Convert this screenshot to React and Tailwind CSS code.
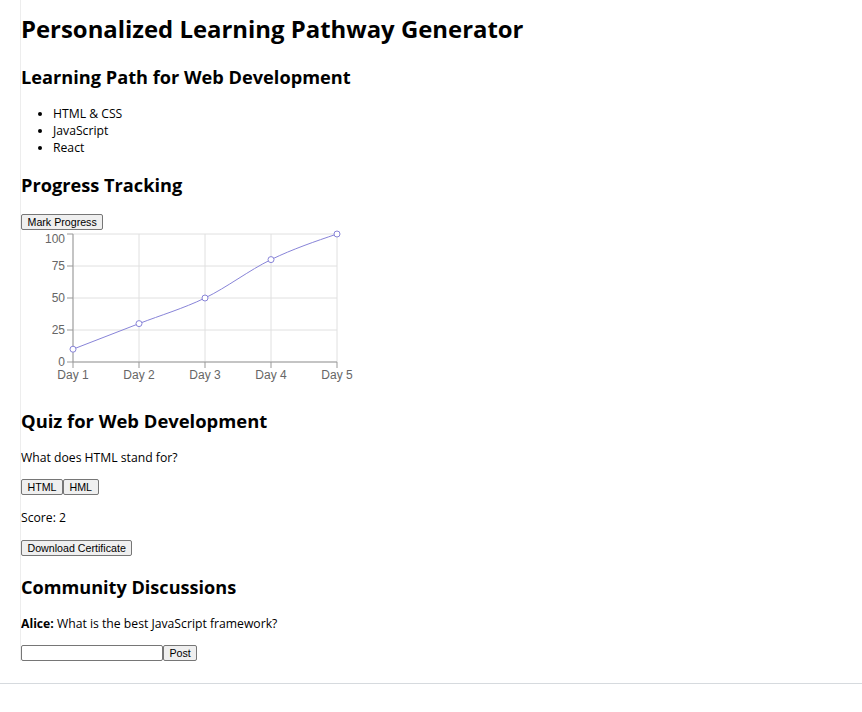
import { useState } from "react";

const progressData = [
  { day: "Day 1", value: 10 },
  { day: "Day 2", value: 30 },
  { day: "Day 3", value: 50 },
  { day: "Day 4", value: 80 },
  { day: "Day 5", value: 100 },
];

// chart geometry (svg coords)
const X0 = 52;
const STEP_X = 66;
const Y0 = 132;
const SCALE_Y = 1.28;

const pts = progressData.map((d, i) => [X0 + i * STEP_X, Y0 - d.value * SCALE_Y]);

// same curve as d3 curveMonotoneX
function monotonePath(p) {
  const n = p.length;
  const sign = (v) => (v < 0 ? -1 : 1);
  const t = new Array(n).fill(0);
  for (let i = 1; i < n - 1; i++) {
    const h0 = p[i][0] - p[i - 1][0];
    const h1 = p[i + 1][0] - p[i][0];
    const s0 = (p[i][1] - p[i - 1][1]) / h0;
    const s1 = (p[i + 1][1] - p[i][1]) / h1;
    const q = (s0 * h1 + s1 * h0) / (h0 + h1);
    t[i] = (sign(s0) + sign(s1)) * Math.min(Math.abs(s0), Math.abs(s1), 0.5 * Math.abs(q)) || 0;
  }
  const h = (a, b) => p[b][0] - p[a][0];
  t[0] = (3 * (p[1][1] - p[0][1]) / h(0, 1) - t[1]) / 2;
  t[n - 1] = (3 * (p[n - 1][1] - p[n - 2][1]) / h(n - 2, n - 1) - t[n - 2]) / 2;
  let d = `M${p[0][0]},${p[0][1]}`;
  for (let i = 0; i < n - 1; i++) {
    const dx = (p[i + 1][0] - p[i][0]) / 3;
    d += `C${p[i][0] + dx},${p[i][1] + dx * t[i]},${p[i + 1][0] - dx},${p[i + 1][1] - dx * t[i + 1]},${p[i + 1][0]},${p[i + 1][1]}`;
  }
  return d;
}

function ProgressChart() {
  const yTicks = [0, 25, 50, 75, 100];
  return (
    <svg
      width="340"
      height="155"
      className="block overflow-visible"
      style={{ fontFamily: '"Liberation Sans", Arial, sans-serif' }}
    >
      {/* grid */}
      {yTicks.map((v) => (
        <line key={"h" + v} x1={X0} x2={X0 + 4 * STEP_X} y1={Y0 - v * SCALE_Y} y2={Y0 - v * SCALE_Y} stroke="#e0e0e0" />
      ))}
      {progressData.map((d, i) => (
        <line key={"v" + i} x1={X0 + i * STEP_X} x2={X0 + i * STEP_X} y1={Y0 - 100 * SCALE_Y} y2={Y0} stroke="#e0e0e0" />
      ))}
      {/* axes */}
      <line x1={X0} x2={X0} y1={Y0 - 100 * SCALE_Y} y2={Y0} stroke="#999" />
      <line x1={X0} x2={X0 + 4 * STEP_X} y1={Y0} y2={Y0} stroke="#999" />
      {yTicks.map((v) => (
        <g key={"yt" + v}>
          <line x1={X0 - 6} x2={X0} y1={Y0 - v * SCALE_Y} y2={Y0 - v * SCALE_Y} stroke="#999" />
          <text
            x={X0 - 8}
            y={Y0 - v * SCALE_Y + (v === 100 ? 4.5 : 0)}
            dy="0.355em"
            textAnchor="end"
            fontSize="12"
            fill="#666"
          >
            {v}
          </text>
        </g>
      ))}
      {progressData.map((d, i) => (
        <g key={"xt" + i}>
          <line x1={X0 + i * STEP_X} x2={X0 + i * STEP_X} y1={Y0} y2={Y0 + 6} stroke="#999" />
          <text x={X0 + i * STEP_X} y={Y0 + 8} dy="0.71em" textAnchor="middle" fontSize="12" fill="#666">
            {d.day}
          </text>
        </g>
      ))}
      <path d={monotonePath(pts)} fill="none" stroke="#8884d8" strokeWidth="1" />
      {pts.map(([x, y], i) => (
        <circle key={i} cx={x} cy={y} r="3" fill="#fff" stroke="#8884d8" />
      ))}
    </svg>
  );
}

const btn =
  "border border-[#767676] bg-[#efefef] rounded-[2px] px-[5.5px] py-[1px] text-[10.67px] leading-[12px] text-black font-['Liberation_Sans',Arial,sans-serif]";

export default function App() {
  const [comment, setComment] = useState("");
  return (
    <div className="border-b border-[#d6dade] pb-[22px] bg-white text-black text-[12.2px] leading-[17px] font-['Open_Sans',sans-serif]">
      <div className="ml-[20px] border-l border-[#ededed] overflow-hidden">
        <h1 className="mt-[12px] text-[23.9px] leading-[34px] font-bold">Personalized Learning Pathway Generator</h1>

        <h2 className="mt-[18px] text-[18.2px] leading-[26px] font-bold">Learning Path for Web Development</h2>
        <ul className="mt-[15px] pl-[32px] list-disc">
          <li>HTML &amp; CSS</li>
          <li>JavaScript</li>
          <li>React</li>
        </ul>

        <h2 className="mt-[16px] text-[18.2px] leading-[26px] font-bold">Progress Tracking</h2>
        <button className={"mt-[16px] block " + btn}>Mark Progress</button>
        <ProgressChart />

        <h2 className="mt-[23px] text-[18.4px] leading-[26px] font-bold">Quiz for Web Development</h2>
        <p className="mt-[15px]">What does HTML stand for?</p>
        <div className="mt-[13px] flex">
          <button className={btn}>HTML</button>
          <button className={btn}>HML</button>
        </div>
        <p className="mt-[14px]">Score: 2</p>
        <button className={"mt-[14px] block " + btn}>Download Certificate</button>

        <h2 className="mt-[18px] text-[18.1px] leading-[26px] font-bold">Community Discussions</h2>
        <p className="mt-[15px]">
          <strong className="font-bold">Alice:</strong> What is the best JavaScript framework?
        </p>
        <div className="mt-[13px] flex">
          <input
            value={comment}
            onChange={(e) => setComment(e.target.value)}
            className="w-[142px] h-[16px] border border-[#767676] rounded-[2px] bg-white px-[2px] text-[10.67px] outline-none"
          />
          <button className={btn}>Post</button>
        </div>
      </div>
    </div>
  );
}
